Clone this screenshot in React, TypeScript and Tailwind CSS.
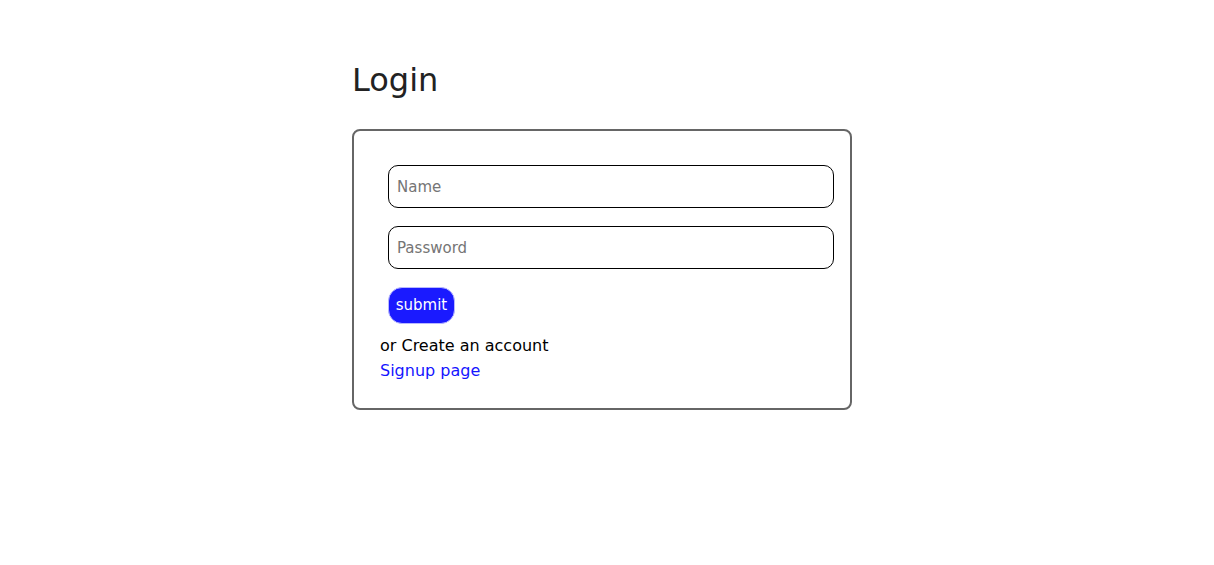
import React from "react";

export default function App() {
  return (
    <div
      className="min-h-[565px] w-full bg-white pt-[60px]"
      style={{ fontFamily: '"DejaVu Sans", "Open Sans", sans-serif' }}
    >
      <div className="ml-[352px] w-[500px]">
        <h1 className="text-[32px] leading-[40px] font-normal text-[#222222]">Login</h1>

        <div className="mt-[29px] h-[281px] rounded-[8px] border-2 border-[#666666] pl-[26px] pt-[34px]">
          <form className="flex flex-col gap-[18px] pl-[8px]">
            <input
              type="text"
              placeholder="Name"
              className="h-[43px] w-[446px] rounded-[10px] border border-black px-[8px] text-[15px] placeholder:text-[#757575] outline-none"
            />
            <input
              type="password"
              placeholder="Password"
              className="h-[43px] w-[446px] rounded-[10px] border border-black px-[8px] text-[15px] placeholder:text-[#757575] outline-none"
            />
            <button
              type="button"
              className="h-[37px] w-[67px] rounded-[14px] border border-[#b8b8ff] bg-[#1a1aff] text-[15px] text-white"
            >
              submit
            </button>
          </form>

          <div className="mt-[9px] flex flex-col text-[16px] leading-[25px]">
            <span className="text-black">or Create an account</span>
            <a href="#" className="w-fit text-[#1515ff]">
              Signup page
            </a>
          </div>
        </div>
      </div>
    </div>
  );
}
